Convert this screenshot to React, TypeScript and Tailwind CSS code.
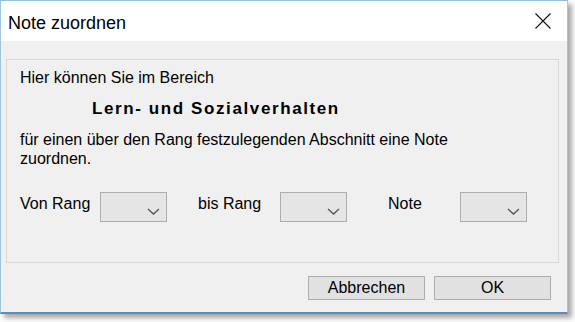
import React from "react";

const font = { fontFamily: '"Liberation Sans", Arial, sans-serif' };

function Combo() {
  return (
    <div className="relative h-[30px] w-[67px] shrink-0 border border-[#adadad] bg-[#e5e5e5]">
      <svg
        className="absolute right-[6px] top-[15px]"
        width="13"
        height="7"
        viewBox="0 0 13 7"
        fill="none"
      >
        <path d="M1 1 L6.5 6 L12 1" stroke="#555" strokeWidth="1.3" />
      </svg>
    </div>
  );
}

function Button({ label }: { label: string }) {
  return (
    <button
      type="button"
      className="h-[24px] w-[117px] border border-[#adadad] bg-[#e1e1e1] text-[16px] leading-[20px] text-black"
    >
      {label}
    </button>
  );
}

export default function App() {
  return (
    <div className="h-[322px] w-[575px] bg-white" style={font}>
      <div className="flex h-[314px] w-[568px] flex-col border-x border-t border-b-2 border-x-[#9cc6e6] border-t-[#8ec0e6] border-b-[#5a8cbd] shadow-[4px_4px_5px_rgba(0,0,0,0.35)]">
        <div className="flex h-[40px] shrink-0 items-center justify-between bg-white pl-[7px] pr-[16px] pt-[4px]">
          <span className="text-[18px] leading-[21px] text-black">Note zuordnen</span>
          <svg width="16" height="16" viewBox="0 0 16 16" className="-mt-[4px]">
            <path d="M0.5 0.5 L15.5 15.5 M15.5 0.5 L0.5 15.5" stroke="#111" strokeWidth="1.1" />
          </svg>
        </div>

        <div className="flex flex-1 flex-col bg-[#f0f0f0] px-[5px] pt-[18px]">
          <div className="flex h-[204px] w-[553px] flex-col border border-[#d9d9d9] bg-[#f0f0f0] pl-[13px] pt-[8px] text-[16px] text-black">
            <p className="leading-[19px]">Hier können Sie im Bereich</p>
            <p className="mt-[12px] pl-[72px] text-[17px] font-bold leading-[20px] tracking-[1.6px]">
              Lern- und Sozialverhalten
            </p>
            <p className="mt-[11px] leading-[19px]">
              für einen über den Rang festzulegenden Abschnitt eine Note
              <br />
              zuordnen.
            </p>

            <div className="mt-[24px] flex items-start">
              <span className="w-[80px] pt-[2px] leading-[19px]">Von Rang</span>
              <Combo />
              <span className="ml-[31px] w-[82px] pt-[2px] leading-[19px]">bis Rang</span>
              <Combo />
              <span className="ml-[41px] w-[72px] pt-[2px] leading-[19px]">Note</span>
              <Combo />
            </div>
          </div>

          <div className="mt-[13px] flex justify-end gap-[9px] pr-[11px]">
            <Button label="Abbrechen" />
            <Button label="OK" />
          </div>
        </div>
      </div>
    </div>
  );
}
